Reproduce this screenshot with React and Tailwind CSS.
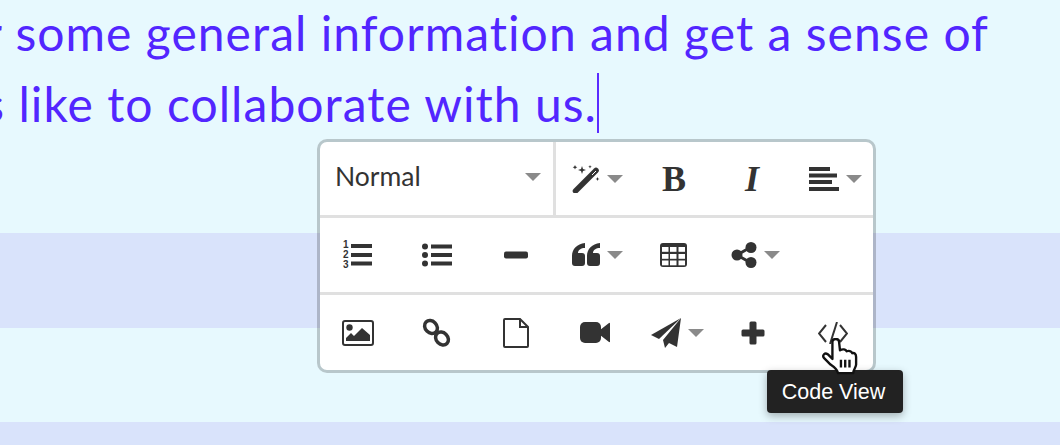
import React from "react";

const Caret = () => (
  <span className="ml-[7px] h-0 w-0 border-x-[8px] border-t-[8px] border-x-transparent border-t-[#8a8a8a]" />
);

const Wand = () => (
  <svg width="28" height="28" viewBox="0 0 28 28" fill="#333">
    <path d="M3.5 26 L24 5.5" stroke="#333" strokeWidth="5.5" strokeLinecap="round" />
    <path d="M20 10 L24 6" stroke="#fff" strokeWidth="1" />
    <path d="M10 1 l1 3 l3 1 l-3 1 l-1 3 l-1-3 l-3-1 l3-1 Z" />
    <path d="M3 0 l.7 1.6 l1.6 .7 l-1.6 .7 l-.7 1.6 l-.7-1.6 l-1.6-.7 l1.6-.7 Z" />
    <path d="M18 0 l.5 1.2 l1.2 .5 l-1.2 .5 l-.5 1.2 l-.5-1.2 l-1.2-.5 l1.2-.5 Z" />
    <path d="M25.5 12 l.6 1.4 l1.4 .6 l-1.4 .6 l-.6 1.4 l-.6-1.4 l-1.4-.6 l1.4-.6 Z" />
  </svg>
);

const AlignLeft = () => (
  <svg width="30" height="24" viewBox="0 0 30 24" fill="#333">
    <rect x="0" y="0" width="21" height="4" />
    <rect x="0" y="6.5" width="28" height="4" />
    <rect x="0" y="13" width="23" height="4" />
    <rect x="0" y="20" width="30" height="4" />
  </svg>
);

const ListOl = () => (
  <svg width="32" height="30" viewBox="0 0 32 30" fill="#333">
    <rect x="9" y="4" width="21" height="4" />
    <rect x="9" y="13" width="21" height="4" />
    <rect x="9" y="21.5" width="21" height="4" />
    <text x="1" y="8" fontSize="10" fontWeight="700" fontFamily="Liberation Sans, sans-serif">1</text>
    <text x="1" y="18" fontSize="10" fontWeight="700" fontFamily="Liberation Sans, sans-serif">2</text>
    <text x="1" y="28" fontSize="10" fontWeight="700" fontFamily="Liberation Sans, sans-serif">3</text>
  </svg>
);

const ListUl = () => (
  <svg width="30" height="24" viewBox="0 0 30 24" fill="#333">
    <circle cx="3" cy="3.5" r="3" />
    <circle cx="3" cy="12" r="3" />
    <circle cx="3" cy="20.5" r="3" />
    <rect x="9" y="1.5" width="21" height="4" />
    <rect x="9" y="10" width="21" height="4" />
    <rect x="9" y="18.5" width="21" height="4" />
  </svg>
);

const Minus = () => (
  <svg width="24" height="8" viewBox="0 0 24 8" fill="#333">
    <rect x="0" y="0.5" width="24" height="7" rx="2" />
  </svg>
);

const Quote = () => (
  <svg width="28" height="24" viewBox="0 0 28 24" fill="#333">
    <path d="M13 0 C5 1 0 6 0 13 V20 a3 3 0 0 0 3 3 H10 a3 3 0 0 0 3-3 V13 a3 3 0 0 0-3-3 H6 C6 7 9 5 13 5 Z" />
    <path d="M28 0 C20 1 15 6 15 13 V20 a3 3 0 0 0 3 3 H25 a3 3 0 0 0 3-3 V13 a3 3 0 0 0-3-3 H21 C21 7 24 5 28 5 Z" />
  </svg>
);

const TableIcon = () => (
  <svg width="27" height="24" viewBox="0 0 27 24">
    <rect width="27" height="24" rx="3" fill="#333" />
    {[4, 11, 17.5].map((y) =>
      [2, 10, 18.5].map((x) => (
        <rect key={x + "-" + y} x={x} y={y} width="6.5" height="4.8" fill="#fff" />
      ))
    )}
  </svg>
);

const Share = () => (
  <svg width="26" height="26" viewBox="0 0 26 26" fill="#333" stroke="#333">
    <path d="M6 13 L20 5 M6 13 L20 21" strokeWidth="3" />
    <circle cx="6" cy="13" r="5.5" stroke="none" />
    <circle cx="20" cy="5.5" r="5.5" stroke="none" />
    <circle cx="20" cy="20.5" r="5.5" stroke="none" />
  </svg>
);

const ImageIcon = () => (
  <svg width="32" height="26" viewBox="0 0 32 26">
    <rect x="1" y="1" width="30" height="24" rx="2" fill="none" stroke="#333" strokeWidth="2" />
    <circle cx="7.5" cy="7.5" r="3.2" fill="#333" />
    <path d="M4 21 V18 L9 13 L12 16 L20 8 L28 15 V21 Z" fill="#333" />
  </svg>
);

const LinkIcon = () => (
  <svg width="30" height="30" viewBox="0 0 30 30" fill="none" stroke="#333" strokeWidth="3.5">
    <ellipse cx="9" cy="9" rx="7" ry="5.8" transform="rotate(45 9 9)" />
    <ellipse cx="20" cy="20.5" rx="7" ry="5.8" transform="rotate(45 20 20.5)" />
  </svg>
);

const FileIcon = () => (
  <svg width="26" height="30" viewBox="0 0 26 30" fill="none" stroke="#333" strokeWidth="2">
    <path d="M2 1 H17 L25 9 V28 a1 1 0 0 1-1 1 H2 a1 1 0 0 1-1-1 V2 a1 1 0 0 1 1-1 Z" />
    <path d="M17 1 V9 H25" />
  </svg>
);

const Video = () => (
  <svg width="30" height="22" viewBox="0 0 30 22" fill="#333">
    <rect x="0" y="0" width="21" height="21" rx="5" />
    <path d="M20 8 L29 1 a.6 .6 0 0 1 1 .5 V19.5 a.6 .6 0 0 1-1 .5 L20 13 Z" />
  </svg>
);

const Plane = () => (
  <svg width="30" height="30" viewBox="0 0 30 30" fill="#333">
    <path d="M30 0 L0 17 L8 21 Z" />
    <path d="M30 0 L12 22 L14 30 L18 25 L26 29 Z" />
  </svg>
);

const Plus = () => (
  <svg width="24" height="24" viewBox="0 0 24 24" fill="#333">
    <rect x="8.5" y="0.5" width="7" height="23" rx="1.5" />
    <rect x="0.5" y="8.5" width="23" height="7" rx="1.5" />
  </svg>
);

const CodeIcon = () => (
  <svg width="30" height="22" viewBox="0 0 30 22" fill="none" stroke="#333" strokeWidth="2">
    <path d="M8 3 L1 11.5 L8 20" />
    <path d="M19 0 L12 22" />
    <path d="M22 3 L29 11.5 L22 20" />
  </svg>
);

const Hand = () => (
  <svg width="36" height="38" viewBox="0 0 38 40">
    <path
      d="M11 4 C11 0 18 0 18 4 L19 13 C22 11 25 12 26 14 C28 13 31 13.5 32 16 C34 15 36 17 36 20 L36 28 C36 31 33 33 33 37 L17 37 C16 33 12 30 9 28 L2 21 C0 18 3 15 6 17 L11 22 Z"
      fill="#fff"
      stroke="#111"
      strokeWidth="2.5"
      strokeLinejoin="round"
    />
    <path d="M20 23 V31 M24.5 23 V31 M29 23 V31" stroke="#111" strokeWidth="2.5" />
  </svg>
);

export default function App() {
  return (
    <div className="relative h-[445px] w-[1060px] overflow-hidden bg-[#e7f9fe]">
      <div className="flex h-[233px] flex-col font-['Lato',sans-serif] text-[48px] leading-[71px] tracking-[1.05px] text-[#5226ff]">
        <div className="-mt-[3px] flex w-[989px] justify-end whitespace-nowrap">
          for some general information and get a sense of
        </div>
        <div className="flex w-[597px] justify-end whitespace-nowrap">
          what it's like to collaborate with us.
        </div>
      </div>
      <div className="h-[95px] bg-[#d9e3fb]" />
      <div className="h-[94px]" />
      <div className="h-[23px] bg-[#d9e3fb]" />

      {/* caret */}
      <div className="absolute left-[597px] top-[73px] h-[60px] w-[2px] bg-[#5b2cff]" />

      {/* floating toolbar */}
      <div className="absolute left-[317px] top-[139px] w-[559px] rounded-[10px] border-3 border-black/20 bg-white bg-clip-padding font-['Lato',sans-serif]">
        <div className="flex h-[76px] items-center border-b-3 border-[#e0e0e0]">
          <div className="flex h-full w-[233px] items-center justify-between pb-[3px] pl-[15px] pr-[12px] text-[26.5px] text-[#333]">
            Normal
            <Caret />
          </div>
          <div className="h-full w-[3px] bg-[#e0e0e0]" />
          <div className="ml-[16px] flex items-center">
            <Wand />
            <Caret />
          </div>
          <span className="ml-[39px] font-['Liberation_Serif',serif] text-[36px] font-bold text-[#333]">B</span>
          <span className="ml-[59px] font-['Liberation_Serif',serif] text-[36px] font-bold italic text-[#333]">I</span>
          <div className="ml-[50px] flex items-center">
            <AlignLeft />
            <Caret />
          </div>
        </div>
        <div className="flex h-[77px] items-center border-b-3 border-[#e0e0e0] pl-[22px]">
          <ListOl />
          <div className="ml-[48px]"><ListUl /></div>
          <div className="ml-[52px]"><Minus /></div>
          <div className="ml-[44px] flex items-center"><Quote /><Caret /></div>
          <div className="ml-[37px]"><TableIcon /></div>
          <div className="ml-[44px] flex items-center"><Share /><Caret /></div>
        </div>
        <div className="flex h-[75px] items-center pl-[22px]">
          <ImageIcon />
          <div className="ml-[48px]"><LinkIcon /></div>
          <div className="ml-[51px]"><FileIcon /></div>
          <div className="ml-[51px]"><Video /></div>
          <div className="ml-[41px] flex items-center"><Plane /><Caret /></div>
          <div className="ml-[37px]"><Plus /></div>
          <div className="ml-[53px]"><CodeIcon /></div>
        </div>
      </div>

      {/* tooltip */}
      <div className="absolute left-[767px] top-[370px] flex h-[43px] w-[136px] items-center justify-center rounded-[4px] bg-[#222] pr-[3px] pt-[1px] font-['Liberation_Sans',sans-serif] text-[21.5px] text-white shadow-[0_3px_8px_rgba(0,0,0,0.3)]">
        Code View
      </div>
      <div className="absolute left-[822px] top-[338px]">
        <Hand />
      </div>
    </div>
  );
}
